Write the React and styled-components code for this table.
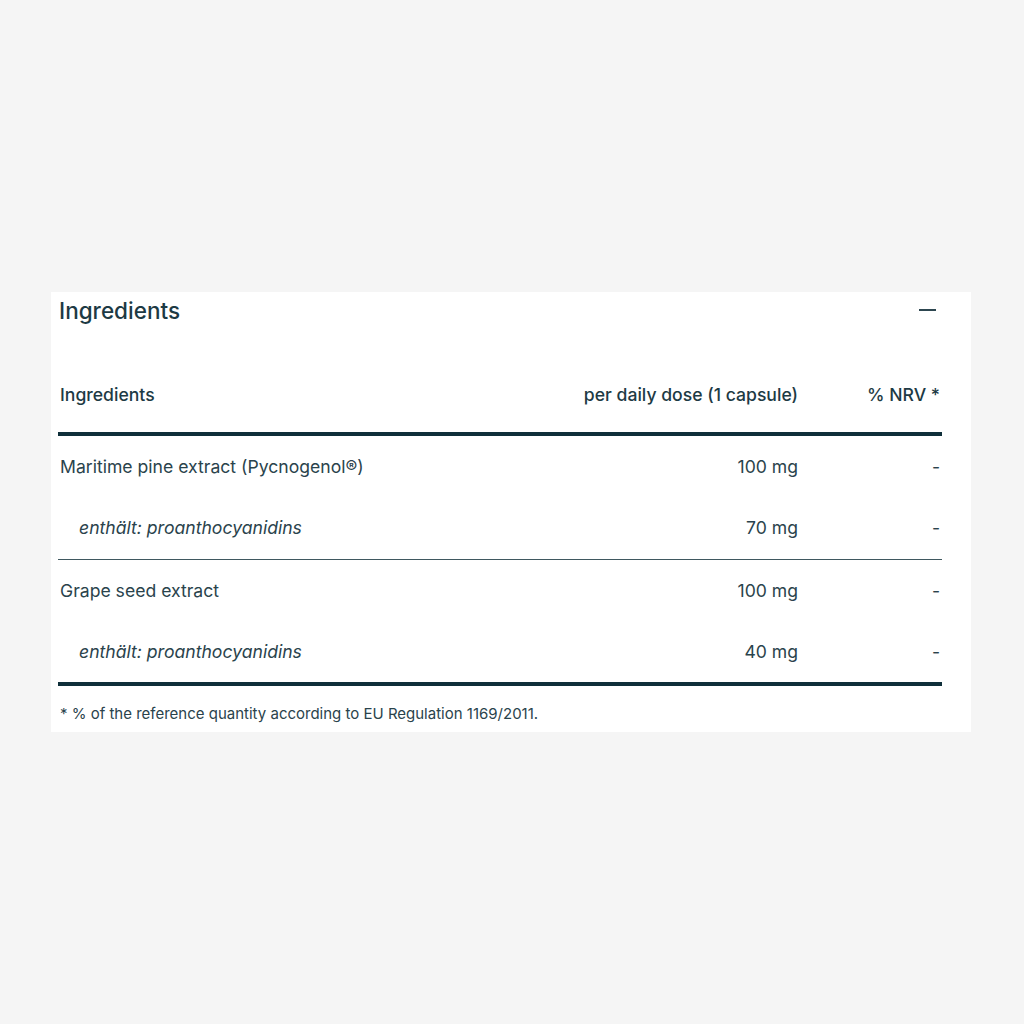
import React from 'react'
import styled, { createGlobalStyle } from 'styled-components'

const rows = [
    { name: 'Maritime pine extract (Pycnogenol®)', amount: '100 mg', nrv: '-' },
    { name: 'enthält: proanthocyanidins', amount: '70 mg', nrv: '-', sub: true, last: true },
    { name: 'Grape seed extract', amount: '100 mg', nrv: '-' },
    { name: 'enthält: proanthocyanidins', amount: '40 mg', nrv: '-', sub: true },
]

function App() {
    return (
        <Page>
            <GlobalStyle />
            <Card>
                <Header>
                    <Title>Ingredients</Title>
                    <Toggle aria-label="collapse">
                        <svg width="17" height="16" viewBox="0 0 17 16">
                            <path d="M0 8h17" stroke="#2d4650" strokeWidth="2" />
                        </svg>
                    </Toggle>
                </Header>
                <Table>
                    <thead>
                        <tr>
                            <HeadCell>Ingredients</HeadCell>
                            <HeadCell align="right">per daily dose (1 capsule)</HeadCell>
                            <HeadCell align="right" width="138">% NRV *</HeadCell>
                        </tr>
                    </thead>
                    <tbody>
                        {rows.map((row, i) => (
                            <Row key={i} divider={row.last}>
                                <Cell sub={row.sub}>{row.name}</Cell>
                                <Cell align="right">{row.amount}</Cell>
                                <Cell align="right">{row.nrv}</Cell>
                            </Row>
                        ))}
                    </tbody>
                </Table>
                <Note>* % of the reference quantity according to EU Regulation 1169/2011.</Note>
            </Card>
        </Page>
    )
}

export default App

const GlobalStyle = createGlobalStyle`
    html, body {
        margin : 0;
        background : #f5f5f5;
        font-family : Inter, "Noto Sans", sans-serif;
    }
`

const Page = styled.div`
    width : 1024px;
    height : 1024px;
    padding : 292px 0 0 51px;
    box-sizing : border-box;
`

const Card = styled.div`
    width : 920px;
    background : #ffffff;
    padding : 0 29px 8px 7px;
    box-sizing : border-box;
    color : #253f48;
`

const Header = styled.div`
    display : flex;
    align-items : center;
    justify-content : space-between;
    height : 36px;
    padding-left : 1px;
`

const Title = styled.h2`
    margin : 0;
    font-size : 22.5px;
    font-weight : 500;
    color : #1d3a44;
`

const Toggle = styled.button`
    border : none;
    background : none;
    padding : 0;
    margin-right : 6px;
    display : flex;
    align-items : center;
`

const Table = styled.table`
    width : 100%;
    border-collapse : collapse;
    margin-top : 56px;
    font-size : 17.6px;
    line-height : 22px;
`

const HeadCell = styled.th`
    text-align : ${p => p.align || 'left'};
    font-weight : 500;
    color : #1d3a44;
    padding : 0 2px 26px 2px;
    border-bottom : 4px solid #0f2f3a;
    white-space : nowrap;
`

const Row = styled.tr`
    height : ${p => (p.divider ? '62px' : '63px')};
    border-bottom : ${p => (p.divider ? '1px solid #3f5860' : 'none')};
    &:last-child { height : 62px; border-bottom : 4px solid #0f2f3a; }
`

const Cell = styled.td`
    text-align : ${p => p.align || 'left'};
    padding : 0 2px 0 ${p => (p.sub ? '21px' : '2px')};
    font-style : ${p => (p.sub ? 'italic' : 'normal')};
    color : #2a434c;
    white-space : nowrap;
`

const Note = styled.p`
    margin : 18px 0 0 2px;
    font-size : 15px;
    line-height : 20px;
    color : #2a434c;
`
